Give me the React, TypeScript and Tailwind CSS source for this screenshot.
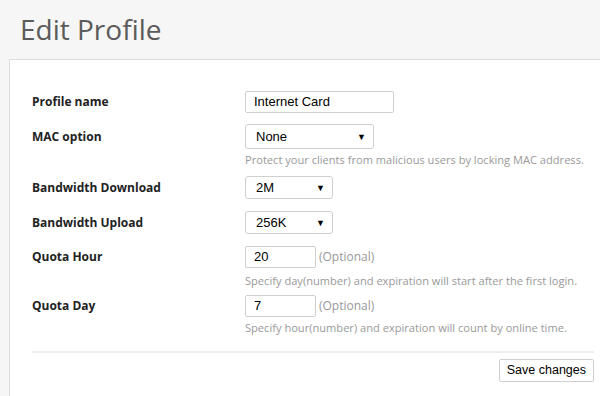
import React from 'react';

const uiFont = { fontFamily: '"Open Sans", "Noto Sans", sans-serif' };
const ctrlFont = { fontFamily: '"Liberation Sans", Arial, sans-serif' };

function Row({
  label,
  h,
  className,
  children,
}: {
  label: string;
  h: number;
  className?: string;
  children: React.ReactNode;
}) {
  return (
    <div className={'flex items-start ' + (className || '')}>
      <div
        className="w-[213px] shrink-0 flex items-center text-[12px] font-bold text-[#222]"
        style={{ height: h }}
      >
        {label}
      </div>
      <div className="flex flex-col">{children}</div>
    </div>
  );
}

function Select({ value, w }: { value: string; w: string }) {
  return (
    <div
      className={
        'relative flex items-center h-full rounded-[3px] border border-[#cfcfcf] bg-white pl-[10px] text-[13px] text-black ' +
        w
      }
      style={ctrlFont}
    >
      {value}
      <span className="absolute right-[7px] top-1/2 -translate-y-1/2 text-[9px] leading-none">▼</span>
    </div>
  );
}

function TextBox({ value, w }: { value: string; w: string }) {
  return (
    <div
      className={
        'flex items-center h-[22px] rounded-[2px] border border-[#cfcfcf] bg-white pl-[8px] text-[13px] text-black ' +
        w
      }
      style={ctrlFont}
    >
      {value}
    </div>
  );
}

function Help({ children, className }: { children: React.ReactNode; className?: string }) {
  return (
    <p className={'text-[11.1px] leading-[14px] text-[#999] whitespace-nowrap ' + (className || '')}>
      {children}
    </p>
  );
}

export default function App() {
  return (
    <div className="w-[600px] h-[396px] overflow-hidden bg-[#f6f6f6]" style={uiFont}>
      {/* Page title */}
      <h1 className="pl-[20px] pt-[12px] h-[59px] text-[28px] leading-[35px] text-[#5b5b5b]">Edit Profile</h1>

      {/* Form card */}
      <div className="ml-[9px] w-[610px] h-[360px] border border-[#dcdcdc] bg-white pt-[31px] pl-[22px] pr-[25px]">
        <Row label="Profile name" h={22}>
          <TextBox value="Internet Card" w="w-[149px]" />
        </Row>

        <Row label="MAC option" h={25} className="mt-[11px]">
          <div className="h-[25px]">
            <Select value="None" w="w-[129px]" />
          </div>
          <Help className="mt-[4px]">Protect your clients from malicious users by locking MAC address.</Help>
        </Row>

        <Row label="Bandwidth Download" h={23} className="mt-[9px]">
          <div className="h-[23px]">
            <Select value="2M" w="w-[88px]" />
          </div>
        </Row>

        <Row label="Bandwidth Upload" h={23} className="mt-[12px]">
          <div className="h-[23px]">
            <Select value="256K" w="w-[88px]" />
          </div>
        </Row>

        <Row label="Quota Hour" h={22} className="mt-[12px]">
          <div className="flex items-center gap-[3px]">
            <TextBox value="20" w="w-[71px]" />
            <span className="text-[12px] text-[#999]">(Optional)</span>
          </div>
          <Help className="mt-[6px]">Specify day(number) and expiration will start after the first login.</Help>
        </Row>

        <Row label="Quota Day" h={22} className="mt-[7px]">
          <div className="flex items-center gap-[3px]">
            <TextBox value="7" w="w-[71px]" />
            <span className="text-[12px] text-[#999]">(Optional)</span>
          </div>
          <Help className="mt-[4px]">Specify hour(number) and expiration will count by online time.</Help>
        </Row>

        <div className="mt-[16px] h-[2px] w-[562px] bg-[#eeeeee]" />

        <div className="w-[562px] flex justify-end mt-[6px]">
          <button
            className="h-[23px] px-[7px] rounded-[2px] border border-[#cfcfcf] bg-white text-[12.5px] text-black"
            style={ctrlFont}
          >
            Save changes
          </button>
        </div>
      </div>
    </div>
  );
}
